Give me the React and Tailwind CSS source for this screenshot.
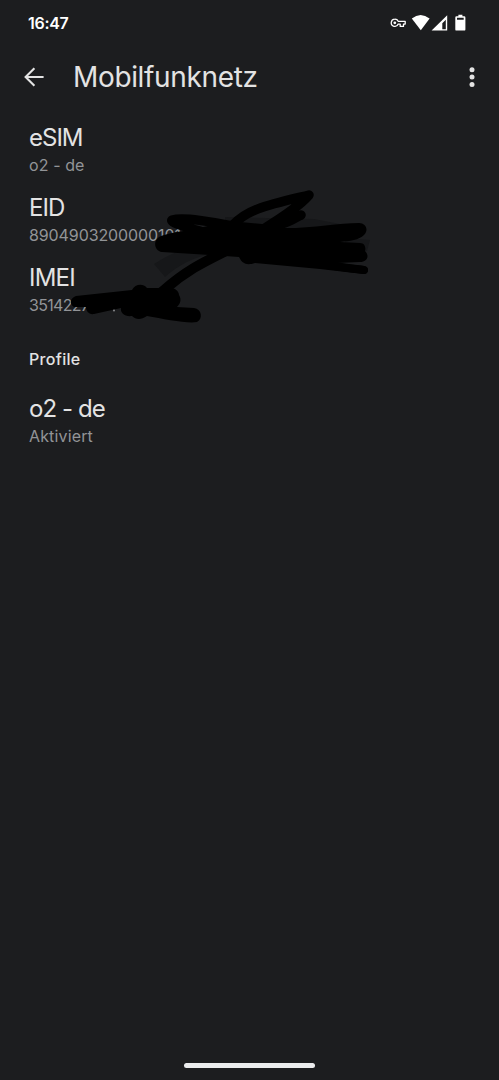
const entries = [
  { title: 'eSIM', value: 'o2 - de', titleClass: 'tracking-[-1px]', valueClass: 'tracking-[0.1px]' },
  { title: 'EID', value: '8904903200000101', titleClass: 'tracking-[-0.9px]', valueClass: 'tracking-[-0.1px]' },
  { title: 'IMEI', value: '3514227', titleClass: 'tracking-[-0.8px]', valueClass: 'tracking-[-0.7px]' },
]

function StatusIcons() {
  return (
    <svg className="h-5 w-[78px]" viewBox="389 13 78 20" fill="#fff">
      <path
        d="M394.8 19.2a3.6 3.6 0 1 0 3.4 4.9h2v2.3h3.3v-2.3h1.7v-2.8h-7a3.6 3.6 0 0 0-3.4-2.1z"
        fill="none"
        stroke="#fff"
        strokeWidth="1.3"
        strokeLinejoin="round"
      />
      <circle cx="394.8" cy="22.8" r="1.4" />
      <path d="M411.8 18.5Q420.6 11.5 429.6 18.5L420.8 30.3z" />
      <path d="M447.2 15.2V30.6H431.6zM445.8 19.8L442.3 23.2V29.2H445.8z" fillRule="evenodd" />
      <path
        d="M458.4 14.7h4v1.5h1.8a1.2 1.2 0 0 1 1.2 1.2v12a1.2 1.2 0 0 1-1.2 1.2h-7.7a1.2 1.2 0 0 1-1.2-1.2v-12a1.2 1.2 0 0 1 1.2-1.2h1.9zM457 17.8v2h6.7v-2z"
        fillRule="evenodd"
      />
    </svg>
  )
}

function Scribbles() {
  return (
    <svg className="pointer-events-none absolute left-0 top-0 h-[340px] w-[499px]" viewBox="0 0 499 340">
      <g fill="#161719">
        <path d="M154 264Q176 249 200 247L220 253Q190 255 165 277z" />
        <path d="M225 217L314 219L340 224L300 230L225 226z" />
        <path d="M345 238L370 240L367 251L345 252z" />
      </g>
      <g fill="none" stroke="#000" strokeLinecap="round" strokeLinejoin="round">
        <path d="M200 231C181 226 170 222 172 220C184 217 214 222 232 226C247 209 268 205 309 195C302 203 283 217 265 228C284 225 292 220 301 215" strokeWidth="9.5" />
        <path d="M226 251C204 262 187 270 164 290L152 300" strokeWidth="10" />
        <path d="M245 258C285 259 325 265 364 270" strokeWidth="8" />
      </g>
      <path d="M164 235C174 232 187 231 199 228L230 221L262 224L278 228C310 229 338 223 359 223C366 223 369 230 364 235C359 240 350 241 340 242L360 243C365 243 366 248 365 251C370 256 367 262 360 262L337 263L364 266C370 268 369 274 363 274L320 269L255 263C246 266 242 263 239 257L210 255L162 252C153 250 152 238 164 235Z" />
      <path d="M76 296L132 290C135 284 143 283 147 288L171 288C176 288 179 292 179 295C182 300 180 304 177 307L194 308C202 309 203 319 197 322C188 324 164 319 147 316C141 320 136 320 132 316C125 317 120 313 121 308L94 314C89 315 86 311 86 307L74 307C69 304 70 298 76 296Z" />
      <circle cx="114" cy="310.5" r="0.9" fill="#929497" />
    </svg>
  )
}

export default function App() {
  return (
    <div className="relative flex h-[1080px] w-[499px] flex-col overflow-hidden bg-[#1c1d1f] font-['Inter',sans-serif] text-[#e3e3e3]">
      <div className="flex h-[46px] items-center justify-between pl-7 pr-8 text-white">
        <span className="text-base font-semibold leading-[22px] tracking-[-0.3px]">16:47</span>
        <StatusIcons />
      </div>

      <header className="flex h-[61px] items-center pl-6 pr-[23px]">
        <button aria-label="Zurück">
          <svg className="size-5" viewBox="0 0 20 20" fill="none" stroke="currentColor" strokeWidth="2.1">
            <path d="M19.6 10H2M10.4 1.2L1.6 10L10.4 18.8" />
          </svg>
        </button>
        <h1 className="ml-[29px] grow text-[28px] leading-9 tracking-[-0.35px]">Mobilfunknetz</h1>
        <button aria-label="Mehr">
          <svg className="h-5 w-2" viewBox="0 0 8 20" fill="currentColor">
            <circle cx="4" cy="2.8" r="2.5" />
            <circle cx="4" cy="10.1" r="2.5" />
            <circle cx="4" cy="17.4" r="2.5" />
          </svg>
        </button>
      </header>

      <main className="flex grow flex-col px-[29px] pt-[15px]">
        {entries.map((entry) => (
          <div key={entry.title} className="h-[70px]">
            <div className={`text-2xl leading-[31px] ${entry.titleClass}`}>{entry.title}</div>
            <div className={`text-base leading-6 text-[#929497] ${entry.valueClass}`}>{entry.value}</div>
          </div>
        ))}
        <h2 className="mt-[15px] text-base font-medium leading-6 tracking-[0.3px]">Profile</h2>
        <div className="mt-[22px]">
          <div className="text-2xl leading-[31px] tracking-[-0.9px]">o2 - de</div>
          <div className="text-base leading-6 tracking-[0.15px] text-[#929497]">Aktiviert</div>
        </div>
      </main>

      <Scribbles />

      <div className="mb-3 h-[5px] w-[131px] self-center rounded-full bg-[#ebeced]" />
    </div>
  )
}
